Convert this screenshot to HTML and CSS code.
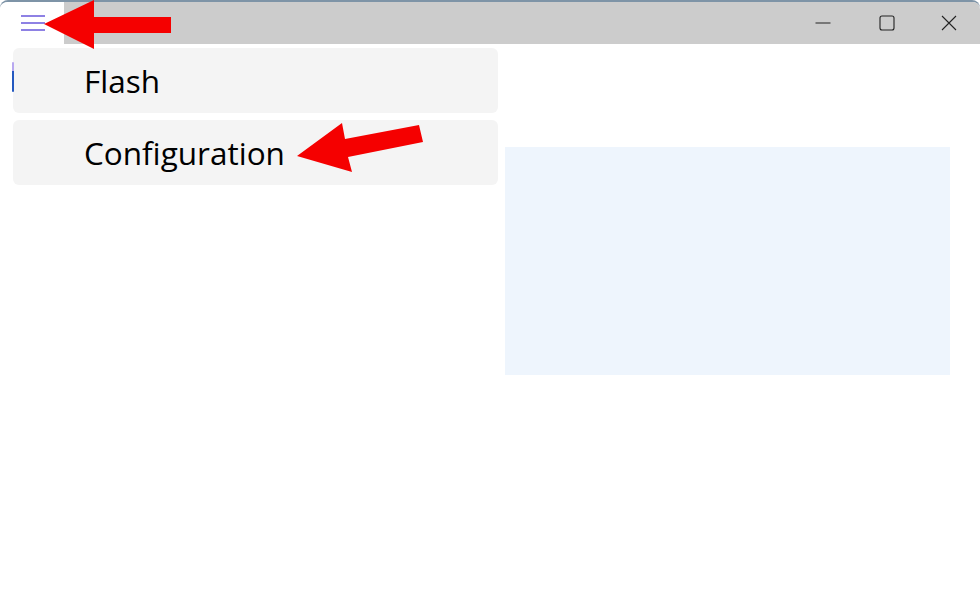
FILE: index.html
```html
<!DOCTYPE html>
<html>
<head>
<meta charset="utf-8">
<link rel="stylesheet" href="styles.css">
</head>
<body>
<div class="window">
  <header class="titlebar">
    <div class="nav-toggle">
      <svg width="24" height="16" viewBox="0 0 24 16"><path d="M0 1h24M0 8h24M0 15h24" stroke="#6a58dc" stroke-width="1.7" fill="none"/></svg>
    </div>
    <div class="caption">
      <div class="ctl"><svg width="16" height="16" viewBox="0 0 16 16"><path d="M0.5 8h15" stroke="#222" stroke-width="1" fill="none"/></svg></div>
      <div class="ctl"><svg width="16" height="16" viewBox="0 0 16 16"><rect x="1" y="1" width="14" height="14" rx="2" stroke="#222" stroke-width="1.1" fill="none"/></svg></div>
      <div class="ctl"><svg width="16" height="16" viewBox="0 0 16 16"><path d="M1 1L15 15M15 1L1 15" stroke="#222" stroke-width="1.1" fill="none"/></svg></div>
    </div>
  </header>
  <main class="content">
    <nav class="menu">
      <div class="item selected">Flash</div>
      <div class="item">Configuration</div>
    </nav>
    <section class="panel"></section>
  </main>
  <svg class="annot" width="980" height="597" viewBox="0 0 980 597">
    <polygon points="44,24 94,0 94,17 171,17 171,33 94,33 94,49" fill="#f50000"/>
    <polygon points="297,156 342,123 345,139 419,125 423,142 348,157 352,172" fill="#f50000"/>
  </svg>
</div>
</body>
</html>
```
FILE: styles.css
```css
html, body {
  margin: 0;
  padding: 0;
  background: #ffffff;
}
body {
  width: 980px;
  height: 597px;
  overflow: hidden;
  font-family: "Open Sans", "Noto Sans", sans-serif;
}
.window {
  position: relative;
  width: 980px;
  height: 597px;
  box-sizing: border-box;
  border-top: 2px solid #7e94a7;
  border-radius: 8px 8px 0 0;
  background: #ffffff;
}
.titlebar {
  display: flex;
  height: 42px;
}
.nav-toggle {
  width: 64px;
  display: flex;
  align-items: center;
  padding-left: 21px;
  box-sizing: border-box;
  background: #ffffff;
  border-top-left-radius: 8px;
}
.nav-toggle svg { display: block; }
.caption {
  flex: 1;
  background: #cccccc;
  display: flex;
  justify-content: flex-end;
  border-top-right-radius: 7px;
}
.ctl {
  width: 62px;
  display: flex;
  align-items: center;
  justify-content: center;
}
.ctl svg { display: block; }
.ctl:nth-child(1) { margin-right: 2px; }
.ctl:last-child { width: 62px; }
.content {
  display: flex;
  gap: 7px;
  padding: 4px 0 0 13px;
}
.menu {
  width: 485px;
  display: flex;
  flex-direction: column;
  gap: 7px;
}
.item {
  position: relative;
  height: 65px;
  background: #f4f4f4;
  border-radius: 6px;
  display: flex;
  align-items: center;
  padding-left: 71px;
  font-size: 31.5px;
  color: #000000;
}
.item.selected::before {
  content: "";
  position: absolute;
  left: -1px;
  top: 14px;
  width: 2px;
  height: 30px;
  border-radius: 1px;
  background: linear-gradient(#b8a8f0 0, #b8a8f0 30%, #2459c0 30%);
}
.panel {
  margin-top: 99px;
  width: 445px;
  height: 228px;
  background: #eef5fd;
}
.annot {
  position: absolute;
  left: 0;
  top: -2px;
  pointer-events: none;
}
```
